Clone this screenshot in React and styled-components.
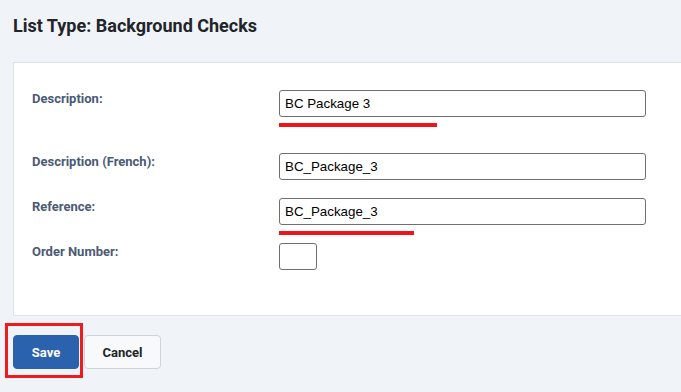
import React from 'react';
import styled, { createGlobalStyle } from 'styled-components';

const GlobalStyle = createGlobalStyle`
  html, body {
    margin: 0;
    background: #f0f3f8;
  }
  body {
    font-family: Roboto, 'Liberation Sans', Arial, sans-serif;
  }
`;

const Page = styled.div`
  width: 681px;
  height: 392px;
  overflow: hidden;
  padding: 15px 0 0 13px;
  box-sizing: border-box;
`;

const Title = styled.h1`
  margin: 0 0 25px;
  font-size: 18px;
  line-height: 22px;
  font-weight: 700;
  color: #212529;
`;

const Panel = styled.div`
  background: #ffffff;
  border: 1px solid #dfe4ea;
  border-right: none;
  padding: 27px 0 45px 18px;
`;

const FormGrid = styled.div`
  display: grid;
  grid-template-columns: 247px 367px;
`;

const Label = styled.label`
  padding-top: 1px;
  font-size: 13px;
  line-height: 16px;
  font-weight: 700;
  color: #4b5a75;
  margin-bottom: ${({ $gap }) => $gap}px;
`;

const Field = styled.div`
  position: relative;
  width: ${({ $width }) => ($width ? `${$width}px` : '100%')};
  margin-bottom: ${({ $gap }) => $gap}px;
`;

const Input = styled.input`
  display: block;
  width: 100%;
  height: 27px;
  box-sizing: border-box;
  border: 1px solid #6f6f6f;
  border-radius: 3px;
  padding: 0 5px;
  font-family: 'Liberation Sans', Arial, sans-serif;
  font-size: 13.333px;
  color: #000;
  background: #fff;
  outline: none;
`;

const Underline = styled.span`
  position: absolute;
  left: 0;
  top: calc(100% + 6px);
  height: 4px;
  width: ${({ $width }) => $width}px;
  background: #f0131a;
`;

const Actions = styled.div`
  display: flex;
  gap: 5px;
  margin-top: 19px;
`;

const Highlight = styled.div`
  position: relative;
  &::after {
    content: '';
    position: absolute;
    left: -8px;
    right: -4px;
    top: -12px;
    bottom: -9px;
    border: 3px solid #ee1c1c;
    pointer-events: none;
  }
`;

const Button = styled.button`
  height: 34px;
  box-sizing: border-box;
  border-radius: 4px;
  font-family: Roboto, 'Liberation Sans', Arial, sans-serif;
  font-size: 13px;
  font-weight: 700;
  cursor: pointer;
  padding: 0;
  width: ${({ $width }) => $width}px;
  background: ${({ $primary }) => ($primary ? '#2a62ae' : '#f8f9fa')};
  color: ${({ $primary }) => ($primary ? '#ffffff' : '#212529')};
  border: 1px solid ${({ $primary }) => ($primary ? '#2a62ae' : '#cfd3d8')};
`;

const rows = [
  { label: 'Description:', value: 'BC Package 3', underline: 158, gap: 36 },
  { label: 'Description (French):', value: 'BC_Package_3', gap: 18 },
  { label: 'Reference:', value: 'BC_Package_3', underline: 135, gap: 18 },
  { label: 'Order Number:', value: '', width: 38, gap: 0 },
];

const App = () => (
  <>
    <GlobalStyle />
    <Page>
      <Title>List Type: Background Checks</Title>
      <Panel>
        <FormGrid>
          {rows.map((row) => (
            <React.Fragment key={row.label}>
              <Label $gap={row.gap}>{row.label}</Label>
              <Field $gap={row.gap} $width={row.width}>
                <Input defaultValue={row.value} />
                {row.underline && <Underline $width={row.underline} />}
              </Field>
            </React.Fragment>
          ))}
        </FormGrid>
      </Panel>
      <Actions>
        <Highlight>
          <Button $primary $width={66}>Save</Button>
        </Highlight>
        <Button $width={77}>Cancel</Button>
      </Actions>
    </Page>
  </>
);

export default App;
